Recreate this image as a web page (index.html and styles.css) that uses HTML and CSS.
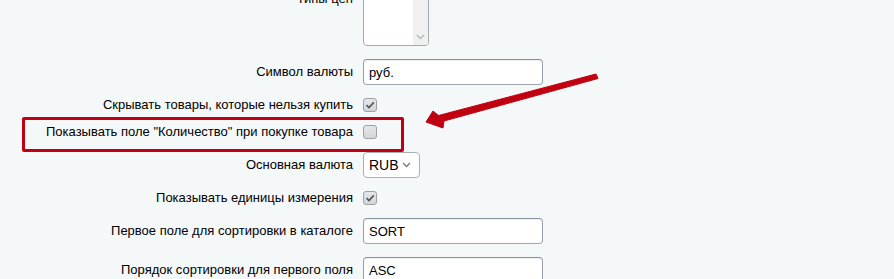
FILE: index.html
```html
<!DOCTYPE html>
<html lang="ru">
<head>
  <meta charset="UTF-8" />
  <title>Настройки каталога</title>
  <link rel="stylesheet" href="styles.css">
</head>
<body>
  <div class="page">
    <div class="form">

      <div class="row row-top">
        <div class="label label-top">Типы цен</div>
        <div class="field">
          <div class="multi">
            <div class="multi-track">
              <svg class="multi-arrow" width="9" height="6" viewBox="0 0 9 6"><path d="M1 1 L4.5 4.5 L8 1" fill="none" stroke="#b8b8b8" stroke-width="1.4"/></svg>
            </div>
          </div>
        </div>
      </div>

      <div class="row">
        <div class="label">Символ валюты</div>
        <div class="field"><input class="text" type="text" value="руб."></div>
      </div>

      <div class="row">
        <div class="label">Скрывать товары, которые нельзя купить</div>
        <div class="field">
          <span class="check">
            <svg width="12" height="12" viewBox="0 0 12 12"><path d="M2.5 6.2 L5 8.6 L9.8 3.4" fill="none" stroke="#4f5559" stroke-width="1.6"/></svg>
          </span>
        </div>
      </div>

      <div class="row">
        <div class="label">Показывать поле "Количество" при покупке товара</div>
        <div class="field"><span class="check"></span></div>
      </div>

      <div class="row">
        <div class="label">Основная валюта</div>
        <div class="field">
          <div class="select">
            <span>RUB</span>
            <svg width="9" height="6" viewBox="0 0 9 6"><path d="M1 1 L4.5 4.5 L8 1" fill="none" stroke="#777" stroke-width="1.3"/></svg>
          </div>
        </div>
      </div>

      <div class="row">
        <div class="label">Показывать единицы измерения</div>
        <div class="field">
          <span class="check">
            <svg width="12" height="12" viewBox="0 0 12 12"><path d="M2.5 6.2 L5 8.6 L9.8 3.4" fill="none" stroke="#4f5559" stroke-width="1.6"/></svg>
          </span>
        </div>
      </div>

      <div class="row">
        <div class="label">Первое поле для сортировки в каталоге</div>
        <div class="field"><input class="text" type="text" value="SORT"></div>
      </div>

      <div class="row">
        <div class="label">Порядок сортировки для первого поля</div>
        <div class="field"><input class="text" type="text" value="ASC"></div>
      </div>

    </div>

    <!-- пометка на скриншоте -->
    <div class="mark-box"></div>
    <svg class="mark-arrow" width="894" height="279" viewBox="0 0 894 279">
      <polygon points="426,122 433,111 438.5,115.5 596,74 598,78.5 444,121 443,128" fill="#c00010" stroke="#c00010" stroke-width="1" stroke-linejoin="round"/>
    </svg>
  </div>
</body>
</html>
```

FILE: styles.css
```css
* {
  box-sizing: border-box;
}
html, body {
  margin: 0;
  padding: 0;
  height: 100%;
  background-color: #f5f8f9;
  font-family: 'Liberation Sans', Arial, Helvetica, sans-serif;
  font-size: 13px;
  color: #000;
  overflow: hidden;
}
.page {
  position: relative;
  width: 894px;
  height: 279px;
  overflow: hidden;
}
.form {
  display: flex;
  flex-direction: column;
  gap: 13px;
  margin-top: -10px;
}
.row {
  display: flex;
  align-items: center;
}
.row-top {
  align-items: flex-start;
}
.label {
  width: 353px;
  margin-right: 10px;
  text-align: right;
  line-height: 14px;
  white-space: nowrap;
}
.label-top {
  padding-top: 2px;
}
.field {
  display: flex;
  align-items: center;
}
.multi {
  width: 66px;
  height: 56px;
  background: #fff;
  border: 1px solid #a3abb3;
  border-radius: 0 0 4px 4px;
  display: flex;
  justify-content: flex-end;
  overflow: hidden;
}
.multi-track {
  width: 15px;
  height: 100%;
  background: #f0f0f0;
  display: flex;
  align-items: flex-end;
  justify-content: center;
  padding-bottom: 5px;
}
.text {
  width: 180px;
  height: 26px;
  padding: 0 5px;
  border: 1px solid;
  border-color: #87919c #959ea9 #9ea7b1 #959ea9;
  border-radius: 4px;
  background: #fff;
  font-family: inherit;
  font-size: 13px;
  color: #000;
  box-shadow: inset 0 1px 2px -1px rgba(180, 188, 191, 0.7);
  outline: none;
}
.check {
  width: 14px;
  height: 14px;
  border: 1px solid #9aa2a8;
  border-radius: 3px;
  background: linear-gradient(#e4e7e9, #d2d7da);
  display: flex;
  align-items: center;
  justify-content: center;
}
.select {
  width: 57px;
  height: 26px;
  padding: 0 8px 0 5px;
  border: 1px solid #a9b1b8;
  border-radius: 4px;
  background: #fff;
  display: flex;
  align-items: center;
  justify-content: space-between;
  font-size: 14px;
}
.mark-box {
  position: absolute;
  left: 22px;
  top: 117px;
  width: 382px;
  height: 35px;
  border: 3px solid #c00010;
  border-radius: 2px;
}
.mark-arrow {
  position: absolute;
  left: 0;
  top: 0;
}
```
